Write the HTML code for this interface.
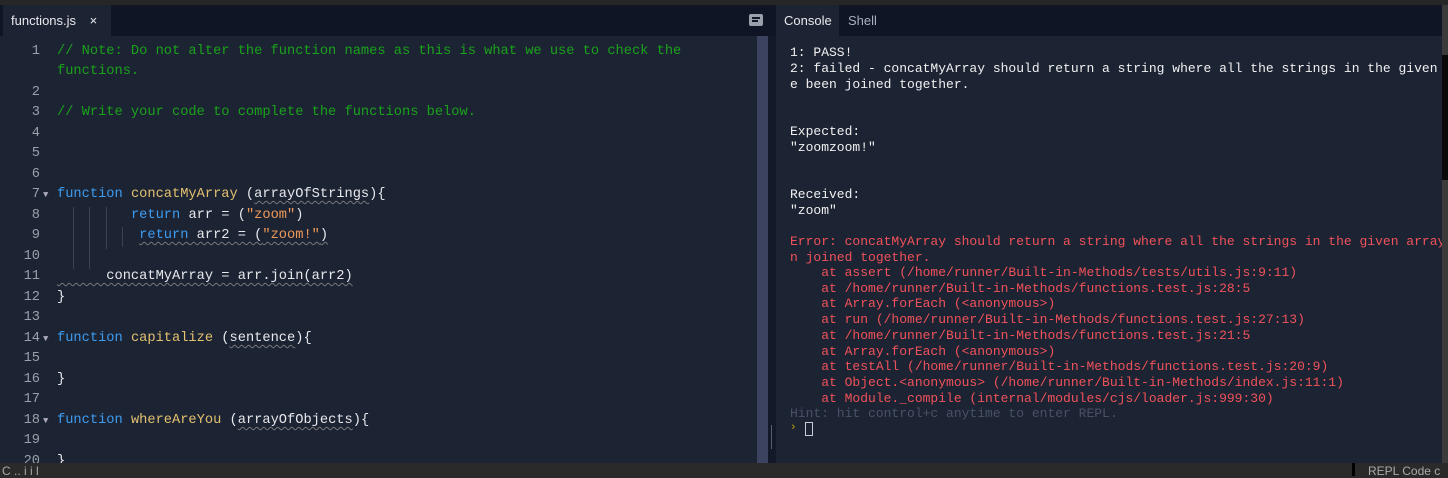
<!DOCTYPE html>
<html><head><style>
*{margin:0;padding:0;box-sizing:border-box}
body{width:1448px;height:476px;overflow:hidden;background:#2a2a2a;position:relative;font-family:"Liberation Sans",sans-serif}
.abs{position:absolute}
.mono{font-family:"Liberation Mono","DejaVu Sans Mono",monospace}
.ed{left:0;top:39px;width:757px;height:424px;background:#1c2333;overflow:hidden}
.ln{position:absolute;left:0;width:40px;text-align:right;color:#9aa0ab;font-size:13.7px}
.cd{position:absolute;left:57px;font-size:13.7px;color:#e8e9ed;white-space:pre}
.c{color:#1aa21a}.k{color:#3d9cf0}.f{color:#e3c16f}.s{color:#ef9a5a}
.sq{text-decoration:underline wavy #777;text-underline-offset:3px;text-decoration-thickness:1px}
.con{left:776px;top:36px;width:666px;height:427px;background:#1c2333;overflow:hidden}
.cl{position:absolute;left:14px;font-size:13px;white-space:pre;color:#f0f0f0}
.r{color:#f0525a}
.tri{font-size:9px;color:#aab;position:absolute;left:43px}
</style></head><body>
<div class="abs" style="left:0;top:0;width:1448px;height:5px;background:#262626"></div>
<div class="abs" style="left:0;top:5px;width:1442px;height:31px;background:#0f1524"></div>
<div class="abs" style="left:0;top:36px;width:757px;height:3px;background:#1c2333"></div>
<div class="abs" style="left:3px;top:5px;width:108px;height:31px;background:#1c2333;color:#e8e9ed;font-size:13px;line-height:31px;padding-left:8px">functions.js <span style="margin-left:10px;font-size:13px">×</span></div>
<div class="abs" style="left:749px;top:14px;width:14px;height:12px;background:#9aa0ab;border-radius:2px"></div>
<div class="abs" style="left:752px;top:17px;width:8px;height:1.5px;background:#0f1524"></div>
<div class="abs" style="left:752px;top:20px;width:6px;height:1.5px;background:#0f1524"></div>
<div class="abs" style="left:776px;top:5px;width:63px;height:31px;background:#1c2333;color:#e8e9ed;font-size:13px;line-height:31px;padding-left:8px">Console</div>
<div class="abs" style="left:848px;top:5px;color:#a8aec0;font-size:13px;line-height:31px">Shell</div>
<div class="abs ed mono">
<div class="ln" style="top:5px">1</div><div class="cd c" style="top:5px">// Note: Do not alter the function names as this is what we use to check the</div>
<div class="cd c" style="top:25px">functions.</div>
<div class="ln" style="top:46px">2</div>
<div class="ln" style="top:66px">3</div><div class="cd c" style="top:66px">// Write your code to complete the functions below.</div>
<div class="ln" style="top:87px">4</div>
<div class="ln" style="top:107px">5</div>
<div class="ln" style="top:128px">6</div>
<div class="ln" style="top:148px">7</div><div class="tri" style="top:151px">▼</div><div class="cd" style="top:148px"><span class="k">function</span> <span class="f">concatMyArray</span> (<span class="sq">arrayOfStrings</span>){</div>
<div class="ln" style="top:169px">8</div><div class="cd" style="top:169px">         <span class="k">return</span> arr = (<span class="s">"zoom"</span>)</div>
<div class="ln" style="top:189px">9</div><div class="cd" style="top:189px">          <span class="sq"><span class="k">return</span> arr2 = (<span class="s">"zoom!"</span>)</span></div>
<div class="ln" style="top:210px">10</div>
<div class="ln" style="top:230px">11</div><div class="cd" style="top:230px"><span class="sq">      concatMyArray = arr.join(arr2)</span></div>
<div class="ln" style="top:251px">12</div><div class="cd" style="top:251px">}</div>
<div class="ln" style="top:271px">13</div>
<div class="ln" style="top:292px">14</div><div class="tri" style="top:295px">▼</div><div class="cd" style="top:292px"><span class="k">function</span> <span class="f">capitalize</span> (<span class="sq">sentence</span>){</div>
<div class="ln" style="top:312px">15</div>
<div class="ln" style="top:333px">16</div><div class="cd" style="top:333px">}</div>
<div class="ln" style="top:353px">17</div>
<div class="ln" style="top:374px">18</div><div class="tri" style="top:377px">▼</div><div class="cd" style="top:374px"><span class="k">function</span> <span class="f">whereAreYou</span> (<span class="sq">arrayOfObjects</span>){</div>
<div class="ln" style="top:394px">19</div>
<div class="ln" style="top:415px">20</div><div class="cd" style="top:415px">}</div>
<div class="abs" style="left:73px;top:168px;width:1px;height:62px;background:#3a4155"></div>
<div class="abs" style="left:89px;top:168px;width:1px;height:62px;background:#3a4155"></div>
<div class="abs" style="left:106px;top:168px;width:1px;height:42px;background:#3a4155"></div>
<div class="abs" style="left:122px;top:188px;width:1px;height:20px;background:#3a4155"></div>
</div>
<div class="abs" style="left:757px;top:36px;width:11px;height:427px;background:#3b4360"></div>
<div class="abs" style="left:768px;top:36px;width:8px;height:427px;background:#131929"></div>
<div class="abs" style="left:771px;top:425px;width:1px;height:24px;background:#555d70"></div>
<div class="abs con mono">
<div class="cl" style="top:9px">1: PASS!</div>
<div class="cl" style="top:25px">2: failed - concatMyArray should return a string where all the strings in the given array hav</div>
<div class="cl" style="top:41px">e been joined together.</div>
<div class="cl" style="top:88px">Expected:</div>
<div class="cl" style="top:104px">"zoomzoom!"</div>
<div class="cl" style="top:151px">Received:</div>
<div class="cl" style="top:167px">"zoom"</div>
<div class="cl r" style="top:198px">Error: concatMyArray should return a string where all the strings in the given array have bee</div>
<div class="cl r" style="top:214px">n joined together.</div>
<div class="cl r" style="top:229px">    at assert (/home/runner/Built-in-Methods/tests/utils.js:9:11)</div>
<div class="cl r" style="top:245px">    at /home/runner/Built-in-Methods/functions.test.js:28:5</div>
<div class="cl r" style="top:260px">    at Array.forEach (&lt;anonymous&gt;)</div>
<div class="cl r" style="top:276px">    at run (/home/runner/Built-in-Methods/functions.test.js:27:13)</div>
<div class="cl r" style="top:292px">    at /home/runner/Built-in-Methods/functions.test.js:21:5</div>
<div class="cl r" style="top:308px">    at Array.forEach (&lt;anonymous&gt;)</div>
<div class="cl r" style="top:323px">    at testAll (/home/runner/Built-in-Methods/functions.test.js:20:9)</div>
<div class="cl r" style="top:339px">    at Object.&lt;anonymous&gt; (/home/runner/Built-in-Methods/index.js:11:1)</div>
<div class="cl r" style="top:355px">    at Module._compile (internal/modules/cjs/loader.js:999:30)</div>
<div class="cl" style="top:370px;color:#4a5166">Hint: hit control+c anytime to enter REPL.</div>
<div class="cl" style="top:386px;color:#c8a800;font-size:11px">›</div>
<div class="abs" style="left:29px;top:386px;width:8px;height:14px;border:1.5px solid #c8ccd4"></div>
</div>
<div class="abs" style="left:1442px;top:5px;width:6px;height:458px;background:#3b3b3b"></div>
<div class="abs" style="left:1442px;top:55px;width:6px;height:125px;background:#0a0a0a"></div>
<div class="abs" style="left:1352px;top:463px;width:3px;height:13px;background:#000"></div>
<div class="abs" style="left:1368px;top:464px;color:#aaa;font-size:12px">REPL Code c</div>
<div class="abs" style="left:2px;top:464px;color:#aaa;font-size:12px">C  ..  i  i  l</div>
</body></html>
